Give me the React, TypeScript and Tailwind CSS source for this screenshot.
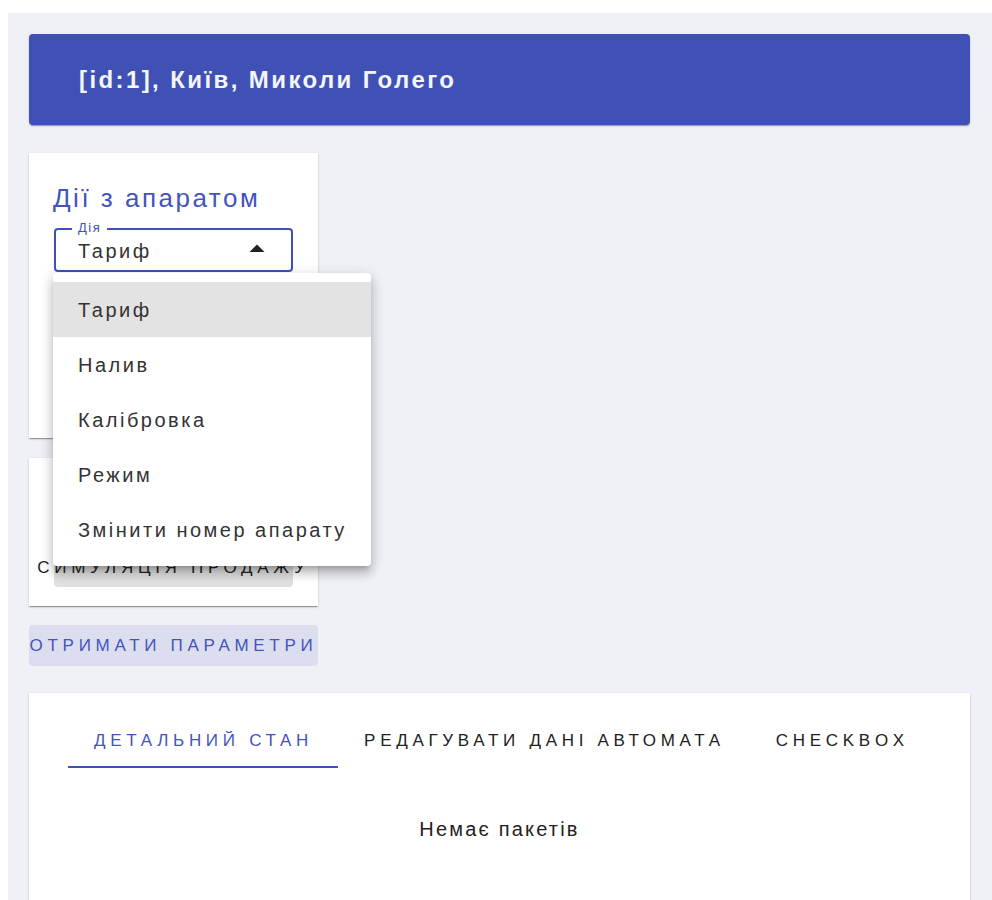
import React, { useState } from 'react';

const actions = ['Тариф', 'Налив', 'Калібровка', 'Режим', 'Змінити номер апарату'];
const tabs = ['Детальний стан', 'Редагувати дані автомата', 'Checkbox'];

const paper =
  'bg-white shadow-[0_2px_1px_-1px_rgba(0,0,0,0.2),0_1px_1px_0_rgba(0,0,0,0.14),0_1px_3px_0_rgba(0,0,0,0.12)]';

function ActionSelect() {
  const [value, setValue] = useState('Тариф');
  return (
    <div className="relative mt-[16px] w-[239px]">
      <div className="relative flex h-[44px] items-center rounded-[4px] border-2 border-[#3f51b5] pl-[22px] pr-[16px]">
        <span className="absolute left-[16px] top-[-9px] bg-white px-[6px] text-[13px] leading-[14px] tracking-[1.5px] text-[#3f51b5]">Дія</span>
        <span className="flex-1 pt-[2px] text-[20px] tracking-[2.5px] text-[#333]">{value}</span>
        <svg viewBox="0 0 24 24" className="mt-[-2px] h-[36px] w-[36px] fill-[#222]">
          <path d="M7 14l5-5 5 5z" />
        </svg>
      </div>
      {/* open menu */}
      <ul className="absolute left-[-1px] top-[45px] z-20 w-[318px] rounded-[4px] bg-white py-[9px] shadow-[0_5px_5px_-3px_rgba(0,0,0,0.2),0_8px_10px_1px_rgba(0,0,0,0.14),0_3px_14px_2px_rgba(0,0,0,0.12)]">
        {actions.map((a) => (
          <li
            key={a}
            onClick={() => setValue(a)}
            className={`flex h-[55px] cursor-pointer items-center whitespace-nowrap px-[25px] text-[20px] tracking-[2.5px] text-[#333] ${
              a === value ? 'bg-[#e3e3e3]' : 'bg-white'
            }`}
          >
            {a}
          </li>
        ))}
      </ul>
    </div>
  );
}

export default function App() {
  const [tab, setTab] = useState(0);
  return (
    <div className="min-h-[900px] bg-white pl-[8px] pt-[13px] font-[family-name:'Liberation_Sans',Arial,sans-serif]">
      <div className="min-h-[887px] bg-[#f0f1f7] pl-[21px] pr-[22px] pt-[21px]">
        <div className="flex h-[91px] items-center rounded-[4px] bg-[#3f51b5] pl-[50px] shadow-[0_2px_1px_-1px_rgba(0,0,0,0.2),0_1px_1px_0_rgba(0,0,0,0.14),0_1px_3px_0_rgba(0,0,0,0.12)]">
          <h1 className="text-[24px] font-bold tracking-[2.4px] text-[#f4f5fb]">[id:1], Київ, Миколи Голего</h1>
        </div>

        <div className={`relative mt-[28px] h-[285px] w-[289px] pl-[25px] pt-[31px] ${paper}`}>
          <h2 className="-ml-[1px] text-[26px] leading-[28px] tracking-[2.5px] text-[#4354bd]">Дії з апаратом</h2>
          <ActionSelect />
        </div>

        <div className={`mt-[20px] h-[148px] w-[289px] pl-[25px] pt-[90px] ${paper}`}>
          <button className="flex h-[39px] w-[239px] items-center justify-center overflow-visible whitespace-nowrap rounded-[4px] bg-[#e0e0e0] text-[17px] uppercase tracking-[4.7px] text-[#222]">
            Симуляція продажу
          </button>
        </div>

        <button className="mt-[19px] flex h-[41px] w-[289px] items-center justify-center whitespace-nowrap rounded-[4px] bg-[#dcdef0] text-[17px] uppercase tracking-[4.7px] text-[#4354bd]">
          Отримати параметри
        </button>

        <div className={`mt-[27px] h-[220px] pl-[39px] pt-[16px] ${paper}`}>
          <div className="flex">
            {tabs.map((t, i) => (
              <button
                key={t}
                onClick={() => setTab(i)}
                className={`flex h-[59px] items-center whitespace-nowrap border-b-2 pl-[26px] pr-[25px] pt-[6px] text-[17px] uppercase tracking-[4.7px] ${
                  i === tab ? 'border-[#3f51b5] text-[#4354bd]' : 'border-transparent text-[#222]'
                }`}
              >
                {t}
              </button>
            ))}
          </div>
          <p className="pr-[39px] pt-[46px] text-center text-[20px] tracking-[2.2px] text-[#222]">Немає пакетів</p>
        </div>
      </div>
    </div>
  );
}
